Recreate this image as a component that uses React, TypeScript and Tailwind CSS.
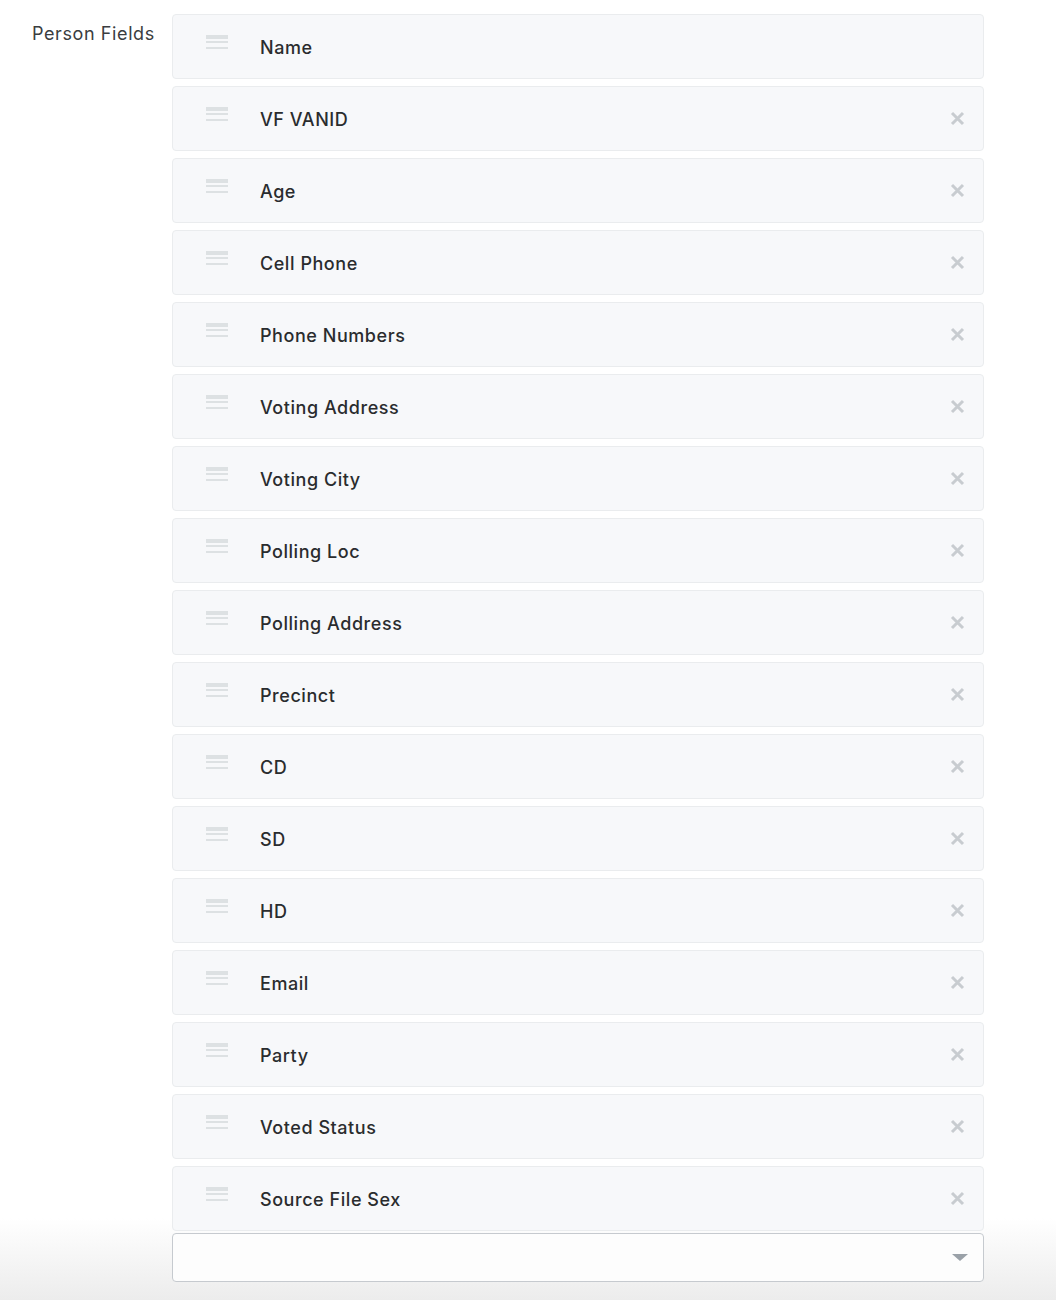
const fields = [
  'Name',
  'VF VANID',
  'Age',
  'Cell Phone',
  'Phone Numbers',
  'Voting Address',
  'Voting City',
  'Polling Loc',
  'Polling Address',
  'Precinct',
  'CD',
  'SD',
  'HD',
  'Email',
  'Party',
  'Voted Status',
  'Source File Sex',
];

const Handle = () => (
  <div className="flex flex-col w-[22px] mt-[-10px]">
    <div className="h-[2px] bg-[#dde1e3]" />
    <div className="h-[2px] bg-[#dde1e3]" />
    <div className="h-[2px] bg-[#dde1e3] mt-[2px]" />
    <div className="h-[2px] bg-[#dde1e3] mt-[4px]" />
  </div>
);

const Cross = () => (
  <svg width="15" height="15" viewBox="0 0 15 15">
    <path
      d="M2 2 L13 13 M13 2 L2 13"
      stroke="#c8ccd0"
      strokeWidth="3"
      strokeLinecap="butt"
    />
  </svg>
);

const App = () => {
  return (
    <div
      className="w-[1056px] h-[1300px] bg-[linear-gradient(to_bottom,#ffffff_1218px,#ececec_1300px)] flex pt-[14px]"
      style={{ fontFamily: 'Inter, "Noto Sans", sans-serif' }}
    >
      <div className="w-[172px] shrink-0 pl-[32px] pt-[6px] text-[18px] text-[#3a3d40] tracking-[0.6px]">
        Person Fields
      </div>
      <div className="w-[812px] flex flex-col gap-[7px]">
        {fields.map((field, idx) => {
          return (
            <div
              key={idx}
              className="h-[65px] flex items-center bg-[#f7f8fa] border border-[#eaecee] rounded-[4px] pl-[33px] pr-[18px]"
            >
              <Handle />
              <div className="ml-[32px] flex-1 pt-[1px] text-[18px] font-medium text-[#2a2c2e] tracking-[0.55px]">
                {field}
              </div>
              {idx > 0 && <Cross />}
            </div>
          );
        })}
        <div className="h-[49px] mt-[-5px] flex items-center justify-end bg-[#fdfdfd] border-[1.5px] border-[#c6cacf] rounded-[4px] pr-[15px]">
          <div className="w-0 h-0 border-l-[8px] border-r-[8px] border-t-[7px] border-l-transparent border-r-transparent border-t-[#9aa1a8]" />
        </div>
      </div>
    </div>
  );
};

export default App;
